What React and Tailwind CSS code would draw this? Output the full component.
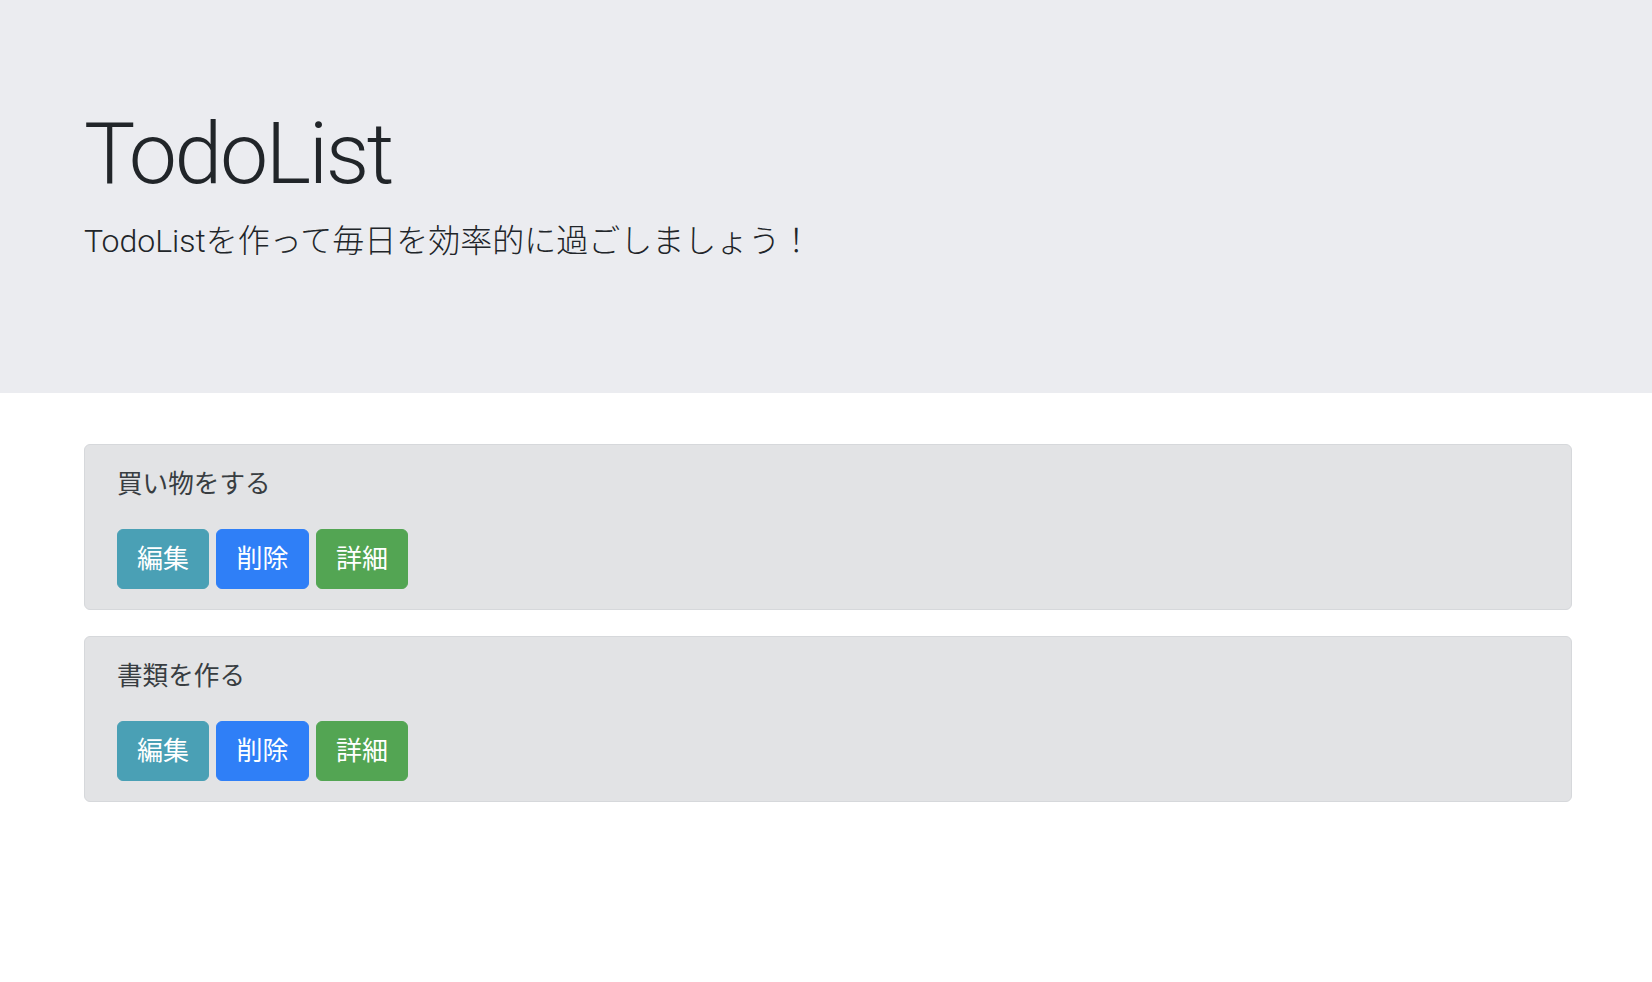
import React from "react";

const todos = ["買い物をする", "書類を作る"];

const font = {
  fontFamily: '"Liberation Sans", "Noto Sans CJK JP", sans-serif',
};

function TodoCard({ title }) {
  return (
    <div className="mb-[26px] rounded-[6px] border border-[#d6d8db] bg-[#e2e3e5] px-[32px] py-[20px] text-[#383d41]">
      <p className="mb-[26px] text-[25.6px] leading-[38px]">{title}</p>
      <div className="flex gap-[7px]">
        <button className="h-[60px] w-[92px] rounded-[6px] border border-[#4aa0b5] bg-[#4aa0b5] text-[26px] text-white">
          編集
        </button>
        <button className="h-[60px] w-[93px] rounded-[6px] border border-[#2f7ff7] bg-[#2f7ff7] text-[26px] text-white">
          削除
        </button>
        <button className="h-[60px] w-[92px] rounded-[6px] border border-[#53a553] bg-[#53a553] text-[26px] text-white">
          詳細
        </button>
      </div>
    </div>
  );
}

export default function App() {
  return (
    <div className="min-h-screen bg-white text-[#212529]" style={font}>
      {/* Jumbotron */}
      <header className="h-[393px] bg-[#ebecf0] pt-[100px]">
        <div
          className="pl-[84px]"
          style={{ fontFamily: 'Roboto, "Noto Sans CJK JP", sans-serif' }}
        >
          <h1 className="mb-[10px] text-[86px] font-light leading-[107px] tracking-[-2.4px]">
            TodoList
          </h1>
          <p className="text-[32px] font-light leading-[48px]">
            TodoListを作って毎日を効率的に過ごしましょう！
          </p>
        </div>
      </header>

      <main className="w-[1572px] pl-[84px] pt-[51px]">
        {todos.map((t) => (
          <TodoCard key={t} title={t} />
        ))}
      </main>
    </div>
  );
}
